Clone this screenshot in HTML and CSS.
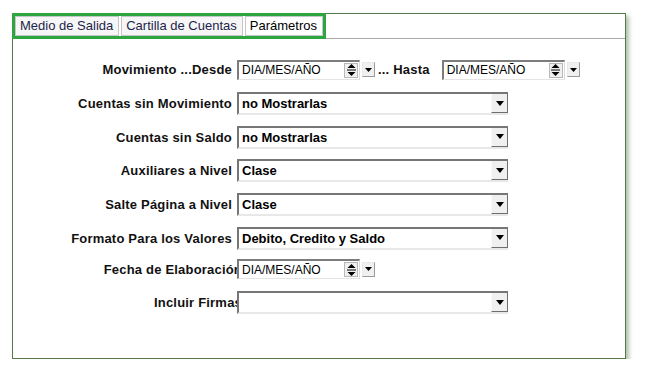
FILE: index.html
```html
<!DOCTYPE html>
<html lang="es">
<head>
    <meta charset="UTF-8">
    <title>Parámetros</title>
    <link rel="stylesheet" href="styles.css">
</head>
<body>
    <div class="panel">
        <div class="tabbar">
            <div class="tabs">
                <span class="tab">Medio de Salida</span>
                <span class="tab">Cartilla de Cuentas</span>
                <span class="tab active">Parámetros</span>
            </div>
        </div>
        <div class="form">
            <div class="row">
                <span class="label">Movimiento ...Desde</span>
                <div class="datebox">
                    <div class="date">
                        <span class="date-text">DIA/MES/AÑO</span>
                        <span class="spin"><svg width="9" height="12" viewBox="0 0 9 12"><polygon points="4.5,0 8.5,4 0.5,4" fill="#000"/><rect x="0" y="5.5" width="9" height="1" fill="#000"/><polygon points="0.5,8 8.5,8 4.5,12" fill="#000"/></svg></span>
                    </div>
                    <span class="drop-sm"><svg width="7" height="4" viewBox="0 0 7 4"><polygon points="0,0 7,0 3.5,4" fill="#000"/></svg></span>
                </div>
                <span class="label-inline">... Hasta</span>
                <div class="datebox">
                    <div class="date">
                        <span class="date-text">DIA/MES/AÑO</span>
                        <span class="spin"><svg width="9" height="12" viewBox="0 0 9 12"><polygon points="4.5,0 8.5,4 0.5,4" fill="#000"/><rect x="0" y="5.5" width="9" height="1" fill="#000"/><polygon points="0.5,8 8.5,8 4.5,12" fill="#000"/></svg></span>
                    </div>
                    <span class="drop-sm"><svg width="7" height="4" viewBox="0 0 7 4"><polygon points="0,0 7,0 3.5,4" fill="#000"/></svg></span>
                </div>
            </div>
            <div class="row">
                <span class="label">Cuentas sin Movimiento</span>
                <div class="select"><span class="select-text">no Mostrarlas</span><span class="select-btn"><svg width="8" height="5" viewBox="0 0 8 5"><polygon points="0,0 8,0 4,5" fill="#000"/></svg></span></div>
            </div>
            <div class="row">
                <span class="label">Cuentas sin Saldo</span>
                <div class="select"><span class="select-text">no Mostrarlas</span><span class="select-btn"><svg width="8" height="5" viewBox="0 0 8 5"><polygon points="0,0 8,0 4,5" fill="#000"/></svg></span></div>
            </div>
            <div class="row">
                <span class="label">Auxiliares a Nivel</span>
                <div class="select"><span class="select-text">Clase</span><span class="select-btn"><svg width="8" height="5" viewBox="0 0 8 5"><polygon points="0,0 8,0 4,5" fill="#000"/></svg></span></div>
            </div>
            <div class="row">
                <span class="label">Salte Página a Nivel</span>
                <div class="select"><span class="select-text">Clase</span><span class="select-btn"><svg width="8" height="5" viewBox="0 0 8 5"><polygon points="0,0 8,0 4,5" fill="#000"/></svg></span></div>
            </div>
            <div class="row">
                <span class="label">Formato Para los Valores</span>
                <div class="select"><span class="select-text">Debito, Credito y Saldo</span><span class="select-btn"><svg width="8" height="5" viewBox="0 0 8 5"><polygon points="0,0 8,0 4,5" fill="#000"/></svg></span></div>
            </div>
            <div class="row short">
                <span class="label long">Fecha de Elaboración</span>
                <div class="datebox">
                    <div class="date">
                        <span class="date-text">DIA/MES/AÑO</span>
                        <span class="spin"><svg width="9" height="12" viewBox="0 0 9 12"><polygon points="4.5,0 8.5,4 0.5,4" fill="#000"/><rect x="0" y="5.5" width="9" height="1" fill="#000"/><polygon points="0.5,8 8.5,8 4.5,12" fill="#000"/></svg></span>
                    </div>
                    <span class="drop-sm"><svg width="7" height="4" viewBox="0 0 7 4"><polygon points="0,0 7,0 3.5,4" fill="#000"/></svg></span>
                </div>
            </div>
            <div class="row last">
                <span class="label long">Incluir Firmas</span>
                <div class="select"><span class="select-text"></span><span class="select-btn"><svg width="8" height="5" viewBox="0 0 8 5"><polygon points="0,0 8,0 4,5" fill="#000"/></svg></span></div>
            </div>
        </div>
    </div>
</body>
</html>
```

FILE: styles.css
```css
body {
    margin: 0;
    background-color: #fff;
    font-family: "Liberation Sans", Arial, sans-serif;
    color: #111;
}
.panel {
    margin: 13px 0 0 12px;
    width: 614px;
    height: 346px;
    box-sizing: border-box;
    border: 1px solid #56784a;
    box-shadow: 3px 3px 4px rgba(100, 135, 90, 0.5);
    background-color: #fff;
}
.tabbar {
    display: flex;
    height: 25px;
    box-sizing: border-box;
    border-bottom: 1px solid #a9a9a9;
}
.tabs {
    display: flex;
    gap: 2px;
    height: 26px;
    box-sizing: border-box;
    margin: -1px 0 0 -1px;
    border: 3px solid #2ea640;
    background-color: #fff;
}
.tab {
    padding: 0 5px 0 4px;
    font-size: 13px;
    line-height: 18px;
    color: #1d1f4c;
    background-color: #f6f6f6;
    border: 1px solid #c6c6c6;
}
.tab.active {
    color: #000;
    background-color: #fff;
}
.form {
    padding-top: 14px;
}
.row {
    display: flex;
    align-items: center;
    height: 33.7px;
}
.row.short {
    height: 28px;
}
.row.last {
    margin-top: 3px;
}
.label {
    width: 224px;
    padding-right: 5px;
    box-sizing: border-box;
    text-align: right;
    white-space: nowrap;
    font-size: 13px;
    font-weight: bold;
    letter-spacing: 0.2px;
}
.label.long {
    width: 229px;
    padding-right: 0;
    margin-right: -5px;
}
.label-inline {
    margin: 0 12px 0 3px;
    font-size: 13px;
    font-weight: bold;
    letter-spacing: 0.2px;
    white-space: nowrap;
}
.datebox {
    position: relative;
    display: flex;
    align-items: center;
    gap: 2px;
}
.date {
    display: flex;
    align-items: center;
    width: 123px;
    height: 20px;
    box-sizing: border-box;
    border-top: 2px solid #7c7c7c;
    border-left: 2px solid #7c7c7c;
    border-right: 1px solid #dcdcdc;
    border-bottom: 1px solid #e4e4e4;
    background-color: #fff;
}
.date-text {
    flex: 1;
    padding-left: 3px;
    font-size: 12px;
    color: #000;
}
.spin {
    display: flex;
    align-items: center;
    justify-content: center;
    width: 14px;
    height: 15px;
    margin-right: 1px;
    box-sizing: border-box;
    background-color: #f0f0f0;
    border: 1px solid #b8b8b8;
}
.drop-sm {
    display: flex;
    align-items: center;
    justify-content: center;
    width: 13px;
    height: 15px;
    box-sizing: border-box;
    background-color: #f0f0f0;
    border: 1px solid #9a9a9a;
    border-top-color: #e8e8e8;
    border-left-color: #e8e8e8;
}
.select {
    position: relative;
    display: flex;
    width: 271px;
    height: 23px;
    box-sizing: border-box;
    border-top: 2px solid #767676;
    border-left: 2px solid #767676;
    border-bottom: 2px solid #e8e8e8;
    background-color: #fff;
}
.select-text {
    flex: 1;
    padding-left: 3px;
    font-size: 13px;
    font-weight: bold;
    line-height: 19px;
    color: #000;
}
.select-btn {
    display: flex;
    align-items: center;
    justify-content: center;
    width: 17px;
    box-sizing: border-box;
    background-color: #f0f0f0;
    border-left: 1px solid #fafafa;
    border-right: 1px solid #6e6e6e;
    border-bottom: 1px solid #6e6e6e;
}
```
